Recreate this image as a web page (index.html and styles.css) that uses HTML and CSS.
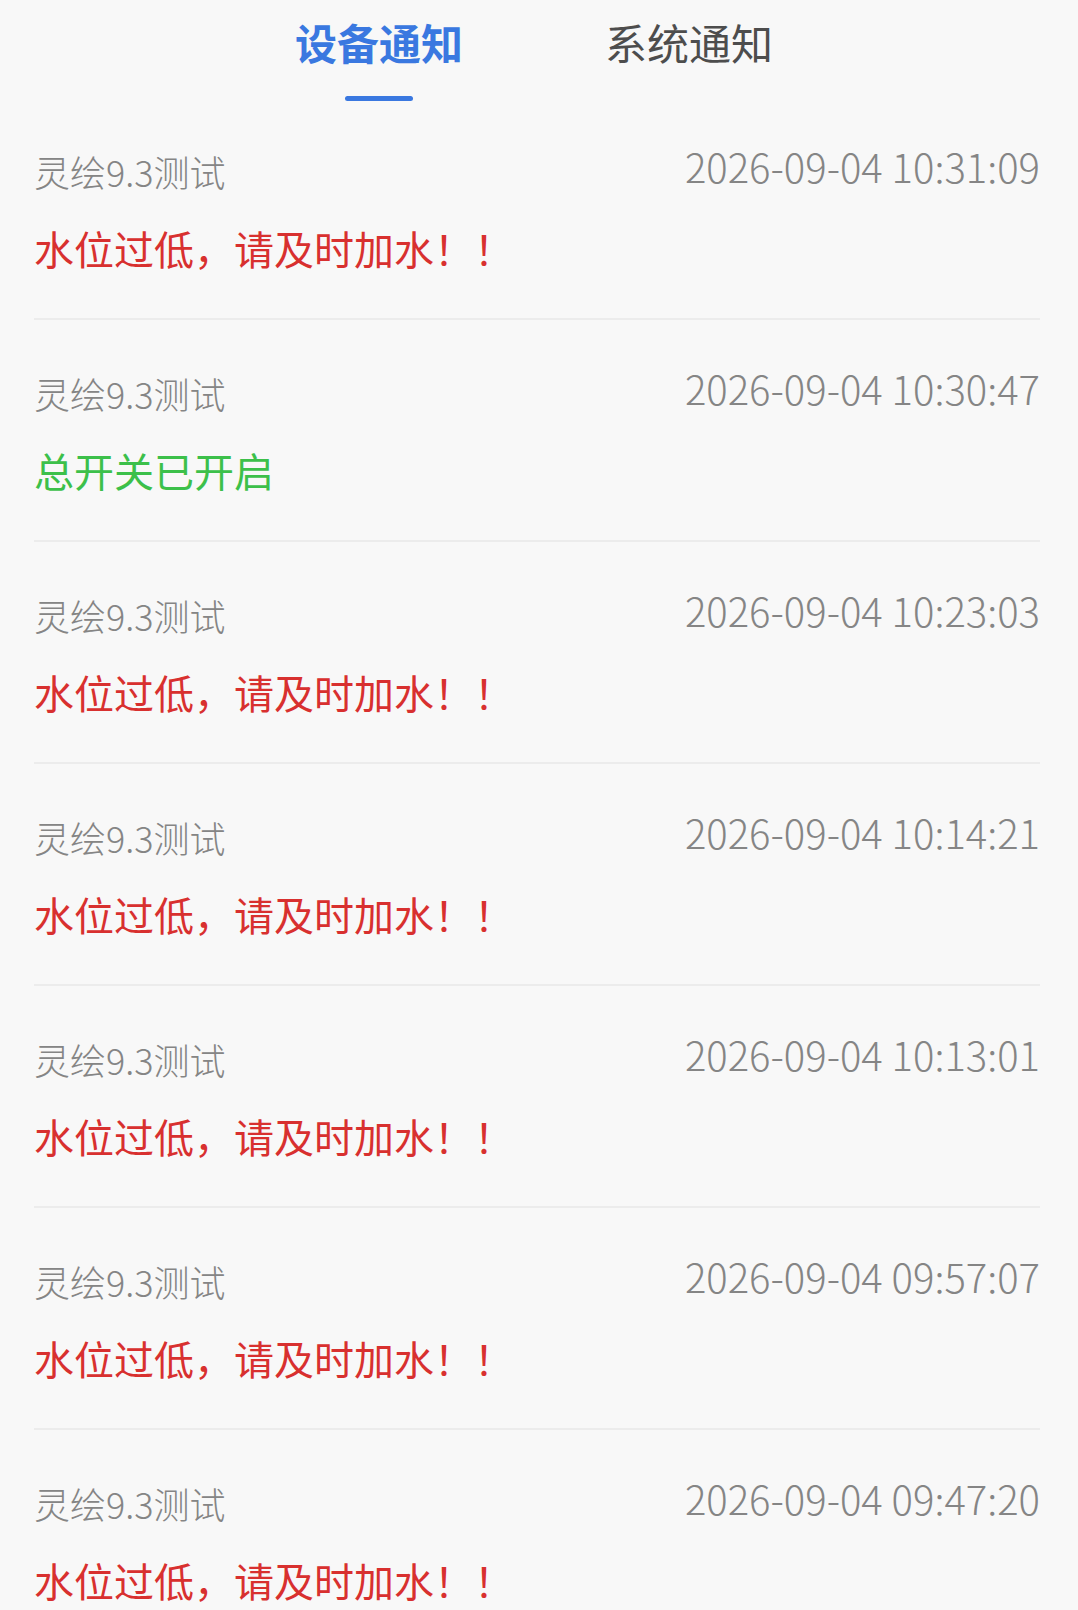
FILE: index.html
```html
<!DOCTYPE html>
<html lang="zh-CN">
<head>
  <meta charset="UTF-8">
  <title>消息通知</title>
  <link rel="stylesheet" href="styles.css">
</head>
<body>
  <div class="tabs">
    <div class="tab active">
      <span class="tab-label">设备通知</span>
      <span class="tab-bar"></span>
    </div>
    <div class="tab">
      <span class="tab-label">系统通知</span>
      <span class="tab-bar"></span>
    </div>
  </div>

  <ul class="notice-list">
    <li class="notice">
      <div class="notice-head">
        <span class="device">灵绘9.3测试</span>
        <span class="time">2026-09-04 10:31:09</span>
      </div>
      <div class="msg warn">水位过低，请及时加水！！</div>
    </li>
    <li class="notice">
      <div class="notice-head">
        <span class="device">灵绘9.3测试</span>
        <span class="time">2026-09-04 10:30:47</span>
      </div>
      <div class="msg ok">总开关已开启</div>
    </li>
    <li class="notice">
      <div class="notice-head">
        <span class="device">灵绘9.3测试</span>
        <span class="time">2026-09-04 10:23:03</span>
      </div>
      <div class="msg warn">水位过低，请及时加水！！</div>
    </li>
    <li class="notice">
      <div class="notice-head">
        <span class="device">灵绘9.3测试</span>
        <span class="time">2026-09-04 10:14:21</span>
      </div>
      <div class="msg warn">水位过低，请及时加水！！</div>
    </li>
    <li class="notice">
      <div class="notice-head">
        <span class="device">灵绘9.3测试</span>
        <span class="time">2026-09-04 10:13:01</span>
      </div>
      <div class="msg warn">水位过低，请及时加水！！</div>
    </li>
    <li class="notice">
      <div class="notice-head">
        <span class="device">灵绘9.3测试</span>
        <span class="time">2026-09-04 09:57:07</span>
      </div>
      <div class="msg warn">水位过低，请及时加水！！</div>
    </li>
    <li class="notice">
      <div class="notice-head">
        <span class="device">灵绘9.3测试</span>
        <span class="time">2026-09-04 09:47:20</span>
      </div>
      <div class="msg warn">水位过低，请及时加水！！</div>
    </li>
  </ul>
</body>
</html>
```

FILE: styles.css
```css
body {
  margin: 0;
  background: #f8f8f8;
  font-family: "Noto Sans CJK SC", "Noto Sans", sans-serif;
  color: #333;
}

.tabs {
  display: flex;
  justify-content: center;
  gap: 142px;
  padding: 14px 10px 0 0;
}

.tab {
  display: flex;
  flex-direction: column;
  align-items: center;
}

.tab-label {
  font-size: 42px;
  line-height: 56px;
  color: #4d4d4d;
}

.tab-bar {
  width: 68px;
  height: 5px;
  margin-top: 26px;
  border-radius: 3px;
  background: transparent;
}

.tab.active .tab-label {
  color: #3a78e0;
  font-weight: bold;
}

.tab.active .tab-bar {
  background: #3a78e0;
}

.notice-list {
  list-style: none;
  margin: 0;
  padding: 0 38px 0 34px;
}

.notice {
  padding: 48px 0 45px;
  border-bottom: 2px solid #ececec;
}

.notice:first-child {
  padding-top: 45px;
}

.notice-head {
  display: flex;
  justify-content: space-between;
  align-items: center;
  height: 50px;
}

.device {
  font-size: 36px;
  font-weight: 300;
  color: #858585;
}

.time {
  font-size: 40px;
  font-weight: 300;
  color: #858585;
  padding-bottom: 10px;
}

.msg {
  margin-top: 27px;
  font-size: 40px;
  line-height: 50px;
}

.msg.warn {
  color: #d8302f;
}

.msg.ok {
  color: #3cc04a;
}
```
